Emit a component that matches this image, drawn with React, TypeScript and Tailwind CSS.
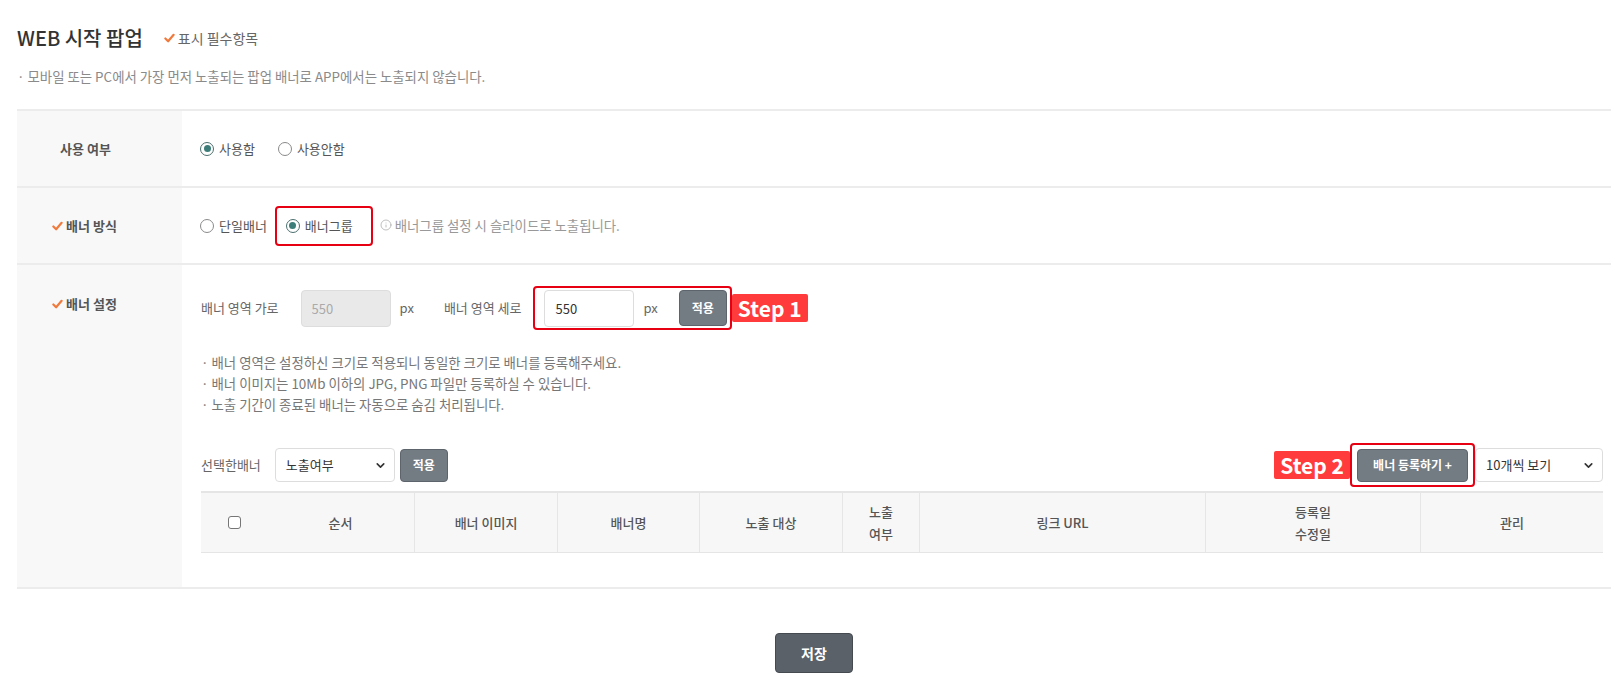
import { Info, ChevronDown } from "lucide-react";

function Check() {
  return (
    <svg width="11" height="10" viewBox="0 0 12 10" className="inline-block shrink-0">
      <path d="M1.5 5.5 L4.5 8.5 L10.5 1.5" fill="none" stroke="#f07a3c" strokeWidth="2.4" strokeLinecap="round" strokeLinejoin="round" />
    </svg>
  );
}

function Radio({ checked, label }: { checked?: boolean; label: string }) {
  return (
    <label className="flex items-center gap-[5px] text-[13px] text-[#555]">
      {checked ? (
        <span className="flex h-[14px] w-[14px] items-center justify-center rounded-full border-[1.5px] border-[#4b6f6d] bg-white">
          <span className="h-[7px] w-[7px] rounded-full bg-[#3d7d79]" />
        </span>
      ) : (
        <span className="h-[14px] w-[14px] rounded-full border-[1.5px] border-[#8a8a8a] bg-white" />
      )}
      {label}
    </label>
  );
}

function StepBadge({ text }: { text: string }) {
  return (
    <span className="flex h-[28px] items-center rounded-[2px] bg-[#ff3b3b] px-[6px] text-[21px] font-bold leading-none text-white">
      {text}
    </span>
  );
}

function Select({ value, width }: { value: string; width: string }) {
  return (
    <div className={`relative ${width}`}>
      <select
        defaultValue={value}
        className="h-[34px] w-full appearance-none rounded-[4px] border border-[#ddd] bg-white pl-[10px] text-[13px] text-[#333] outline-none"
      >
        <option>{value}</option>
      </select>
      <ChevronDown size={13} strokeWidth={3} className="pointer-events-none absolute right-[8px] top-[11px] text-[#333]" />
    </div>
  );
}

const columns = [
  { label: "순서", w: "w-[148px]", border: true },
  { label: "배너 이미지", w: "w-[143px]", border: true },
  { label: "배너명", w: "w-[142px]", border: true },
  { label: "노출 대상", w: "w-[143px]", border: true },
  { label: "노출\n여부", w: "w-[77px]", border: true },
  { label: "링크 URL", w: "w-[286px]", border: true },
  { label: "등록일\n수정일", w: "w-[215px]", border: true },
  { label: "관리", w: "flex-1", border: false },
];

export default function App() {
  return (
    <div className="min-h-[688px] w-[1623px] bg-white pl-[17px] pr-[12px] font-['Noto_Sans_CJK_KR','Noto_Sans',sans-serif] text-[#333]">
      {/* header */}
      <div className="flex items-center pt-[24px]">
        <h1 className="text-[20px] font-medium leading-[28px] text-[#333]">WEB 시작 팝업</h1>
        <span className="ml-[21px] flex items-center gap-[3px] text-[14px] text-[#666]">
          <Check />
          표시 필수항목
        </span>
      </div>
      <p className="mt-[14px] text-[13.4px] leading-[20px] text-[#8a8a8a]">· 모바일 또는 PC에서 가장 먼저 노출되는 팝업 배너로 APP에서는 노출되지 않습니다.</p>

      {/* form table */}
      <div className="mt-[23px] border-t-2 border-b-2 border-[#ececec]">
        <div className="flex h-[77px] border-b-2 border-[#ececec]">
          <div className="flex w-[165px] items-center justify-center bg-[#f8f8f8] pr-[28px] text-[13px] font-semibold text-[#555]">사용 여부</div>
          <div className="flex items-center gap-[23px] pl-[18px]">
            <Radio checked label="사용함" />
            <Radio label="사용안함" />
          </div>
        </div>

        <div className="flex h-[77px] border-b-2 border-[#ececec]">
          <div className="flex w-[165px] items-center justify-center gap-[3px] bg-[#f8f8f8] pr-[30px] text-[13px] font-semibold text-[#555]">
            <Check />
            배너 방식
          </div>
          <div className="flex items-center pl-[18px]">
            <Radio label="단일배너" />
            <div className="ml-[8px] flex h-[40px] items-center rounded-[4px] border-2 border-[#e60012] pl-[9px] pr-[18px]">
              <Radio checked label="배너그룹" />
            </div>
            <span className="ml-[7px] flex items-center gap-[3px] text-[13.4px] text-[#999]">
              <Info size={12} strokeWidth={1.5} className="text-[#aaa]" />
              배너그룹 설정 시 슬라이드로 노출됩니다.
            </span>
          </div>
        </div>

        <div className="flex">
          <div className="flex w-[165px] justify-center gap-[3px] bg-[#f8f8f8] pr-[30px] pt-[29px] text-[13px] font-semibold text-[#555]">
            <div className="flex h-[20px] items-center gap-[3px]">
              <Check />
              배너 설정
            </div>
          </div>
          <div className="flex-1 pb-[34px] pl-[19px] pr-[8px] pt-[21px]">
            <div className="flex items-center text-[13px] text-[#666]">
              <span>배너 영역 가로</span>
              <input
                disabled
                defaultValue="550"
                className="ml-[22px] h-[37px] w-[90px] rounded-[4px] border border-[#ddd] bg-[#e9e9e9] pl-[10px] text-[13px] text-[#aaa]"
              />
              <span className="ml-[9px]">px</span>
              <span className="ml-[30px]">배너 영역 세로</span>
              <div className="ml-[12px] flex h-[44px] items-center rounded-[4px] border-2 border-[#e60012] pl-[9px] pr-[3px]">
                <input
                  defaultValue="550"
                  className="h-[37px] w-[90px] rounded-[4px] border border-[#ddd] bg-white pl-[10px] text-[13px] text-[#333] outline-none"
                />
                <span className="ml-[9px]">px</span>
                <button className="ml-[21px] h-[36px] w-[48px] rounded-[4px] border border-[#5d646b] bg-[#737b83] text-[12px] font-bold text-white">적용</button>
              </div>
              <StepBadge text="Step 1" />
            </div>

            <ul className="mt-[22px] text-[13.4px] leading-[21px] text-[#777]">
              <li>· 배너 영역은 설정하신 크기로 적용되니 동일한 크기로 배너를 등록해주세요.</li>
              <li>· 배너 이미지는 10Mb 이하의 JPG, PNG 파일만 등록하실 수 있습니다.</li>
              <li>· 노출 기간이 종료된 배너는 자동으로 숨김 처리됩니다.</li>
            </ul>

            <div className="mt-[28px] flex items-center">
              <span className="text-[13px] text-[#666]">선택한배너</span>
              <div className="ml-[14px]">
                <Select value="노출여부" width="w-[120px]" />
              </div>
              <button className="ml-[5px] h-[33px] w-[48px] rounded-[4px] border border-[#5d646b] bg-[#737b83] text-[12px] font-bold text-white">적용</button>
              <div className="ml-auto flex items-center">
                <StepBadge text="Step 2" />
                <div className="flex h-[44px] items-center rounded-[4px] border-2 border-[#e60012] px-[5px]">
                  <button className="h-[33px] w-[111px] rounded-[4px] border border-[#5d646b] bg-[#737b83] text-[12px] font-bold text-white">배너 등록하기 +</button>
                </div>
                <Select value="10개씩 보기" width="w-[128px]" />
              </div>
            </div>

            <div className="mt-[4px] flex h-[62px] border-t-2 border-b border-[#e5e5e5] bg-[#f7f7f7] text-[13px] font-medium text-[#555]">
              <div className="flex w-[66px] items-center justify-center">
                <span className="h-[13px] w-[13px] rounded-[3px] border border-[#767676] bg-white" />
              </div>
              {columns.map((c) => (
                <div
                  key={c.label}
                  className={`flex ${c.w} items-center justify-center whitespace-pre-line text-center leading-[22px] ${c.border ? "border-r border-[#e6e6e6]" : ""}`}
                >
                  {c.label}
                </div>
              ))}
            </div>
          </div>
        </div>
      </div>

      <div className="flex justify-center pt-[44px]">
        <button className="h-[40px] w-[78px] rounded-[4px] border border-[#444a50] bg-[#5b6168] text-[14px] font-bold text-white">저장</button>
      </div>
    </div>
  );
}
